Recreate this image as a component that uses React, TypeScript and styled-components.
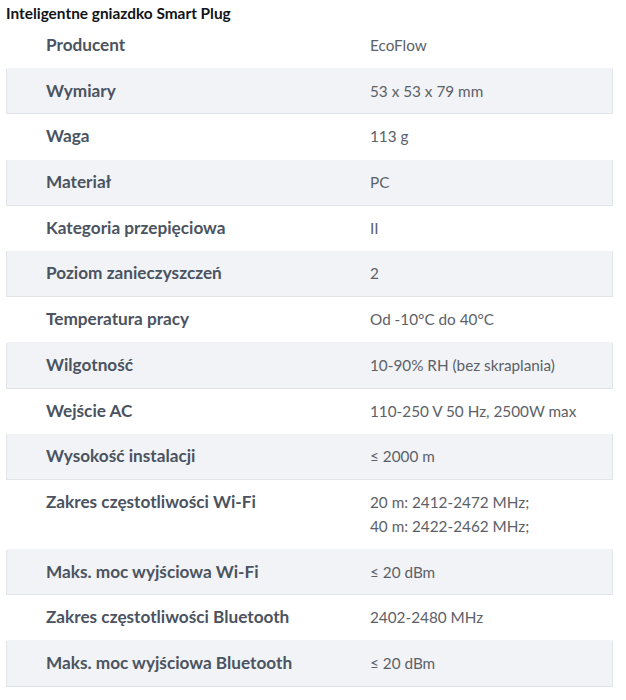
import React from "react";
import styled, { createGlobalStyle } from "styled-components";

const GlobalStyle = createGlobalStyle`
  body {
    margin: 0;
    padding: 4px 6px;
    background: #ffffff;
    font-family: Lato, "Noto Sans", sans-serif;
  }
`;

const Title = styled.h3`
  margin: 0;
  font-size: 15.4px;
  line-height: 18px;
  font-weight: 700;
  color: #111418;
`;

const Table = styled.table`
  width: 607px;
  border-collapse: collapse;
`;

const Row = styled.tr<{ shaded?: boolean }>`
  background: ${(p) => (p.shaded ? "#f1f3f6" : "#ffffff")};
  border: 1px solid ${(p) => (p.shaded ? "#e1e5ea" : "transparent")};
`;

const Label = styled.td`
  width: 286px;
  padding: 10px 0 10.7px 39px;
  line-height: 24px;
  font-size: 17.2px;
  font-weight: 700;
  color: #4b5360;
  vertical-align: top;
`;

const Value = styled.td`
  padding: 10px 10px 10.7px 38px;
  line-height: 24px;
  font-size: 15.3px;
  color: #5c6168;
  vertical-align: top;
`;

const specs: [string, string[]][] = [
  ["Producent", ["EcoFlow"]],
  ["Wymiary", ["53 x 53 x 79 mm"]],
  ["Waga", ["113 g"]],
  ["Materiał", ["PC"]],
  ["Kategoria przepięciowa", ["II"]],
  ["Poziom zanieczyszczeń", ["2"]],
  ["Temperatura pracy", ["Od -10°C do 40°C"]],
  ["Wilgotność", ["10-90% RH (bez skraplania)"]],
  ["Wejście AC", ["110-250 V 50 Hz, 2500W max"]],
  ["Wysokość instalacji", ["≤ 2000 m"]],
  ["Zakres częstotliwości Wi-Fi", ["20 m: 2412-2472 MHz;", "40 m: 2422-2462 MHz;"]],
  ["Maks. moc wyjściowa Wi-Fi", ["≤ 20 dBm"]],
  ["Zakres częstotliwości Bluetooth", ["2402-2480 MHz"]],
  ["Maks. moc wyjściowa Bluetooth", ["≤ 20 dBm"]],
];

export default function App() {
  return (
    <>
      <GlobalStyle />
      <Title>Inteligentne gniazdko Smart Plug</Title>
      <Table>
        <tbody>
          {specs.map(([label, lines], i) => (
            <Row key={label} shaded={i % 2 === 1}>
              <Label>{label}</Label>
              <Value>
                {lines.map((l, j) => (
                  <div key={j}>{l}</div>
                ))}
              </Value>
            </Row>
          ))}
        </tbody>
      </Table>
    </>
  );
}
